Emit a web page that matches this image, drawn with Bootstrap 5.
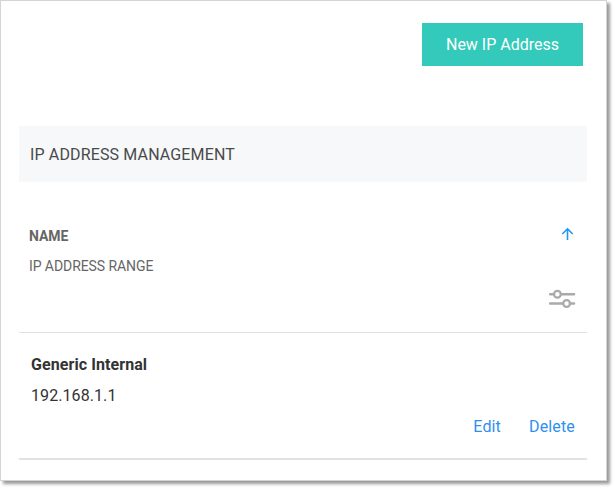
<!DOCTYPE html>
<html lang="en">
<head>
<meta charset="utf-8">
<meta name="viewport" content="width=device-width, initial-scale=1">
<title>IP Address Management</title>
<link href="https://cdn.jsdelivr.net/npm/bootstrap@5.3.0/dist/css/bootstrap.min.css" rel="stylesheet">
<style>
body { font-family: Roboto, "Liberation Sans", sans-serif; font-size: 16px; line-height: 24px; color: #333; background: #fff; height: 489px; }
.panel { width: 607px; height: 481px; border: 1px solid #d4d4d4; padding: 22px 19px 0 18px; box-shadow: 3px 3px 3px rgba(0,0,0,.4); background: #fff; }
.btn-new { --bs-btn-color: #fff; --bs-btn-bg: #33cabb; --bs-btn-border-color: #33cabb; --bs-btn-hover-color: #fff; --bs-btn-hover-bg: #2cb7a9; width: 161px; height: 43px; padding: 0; margin-right: 4px; }
.section-title { height: 56px; margin-top: 60px; padding: 2px 0 0 11px; background: #f6f8fa; color: #4a4a4a; letter-spacing: .14px; }
.list-head { height: 151px; padding: 39px 11px 0 10px; border-bottom: 1px solid #e2e2e2; font-size: 14px; line-height: 30px; color: #666; letter-spacing: -.08px; }
.sort-icon { margin-right: 1px; }
.filter-line { margin-top: 8px; line-height: 0; }
.entry { height: 127px; padding: 16px 12px 0; border-bottom: 2px solid #e2e2e2; line-height: 31px; letter-spacing: .08px; }
.entry a { color: #2f8fef; }
.entry-links { gap: 28px; letter-spacing: .15px; }
</style>
<script src="https://cdn.jsdelivr.net/npm/bootstrap@5.3.0/dist/js/bootstrap.bundle.min.js"></script>
</head>
<body>
<main class="panel">
  <div class="d-flex justify-content-end">
    <button type="button" class="btn btn-new rounded-0">New IP Address</button>
  </div>
  <div class="section-title d-flex align-items-center">IP ADDRESS MANAGEMENT</div>
  <div class="list-head">
    <div class="d-flex justify-content-between">
      <span class="fw-bold">NAME</span>
      <svg class="sort-icon" width="16" height="26" viewBox="0 0 16 26" fill="none" stroke="#2196f3" stroke-width="1.6"><path d="M8.5 19V8M3.3 13L8.5 7.8L13.7 13"/></svg>
    </div>
    <div>IP ADDRESS RANGE</div>
    <div class="filter-line d-flex justify-content-end">
      <svg width="28" height="20" viewBox="0 0 28 20" fill="none" stroke="#aaa" stroke-width="2.6" stroke-linecap="round"><path d="M2.2 5.3H6M13 5.3H26M2.2 14.5H15M22 14.5H26"/><circle cx="9.4" cy="5.3" r="3.4" stroke-width="2.2"/><circle cx="18.6" cy="14.5" r="3.4" stroke-width="2.2"/></svg>
    </div>
  </div>
  <div class="entry mt-0">
    <div class="fw-bold">Generic Internal</div>
    <div>192.168.1.1</div>
    <div class="entry-links d-flex justify-content-end">
      <a href="#" class="text-decoration-none">Edit</a>
      <a href="#" class="text-decoration-none">Delete</a>
    </div>
  </div>
</main>
</body>
</html>
